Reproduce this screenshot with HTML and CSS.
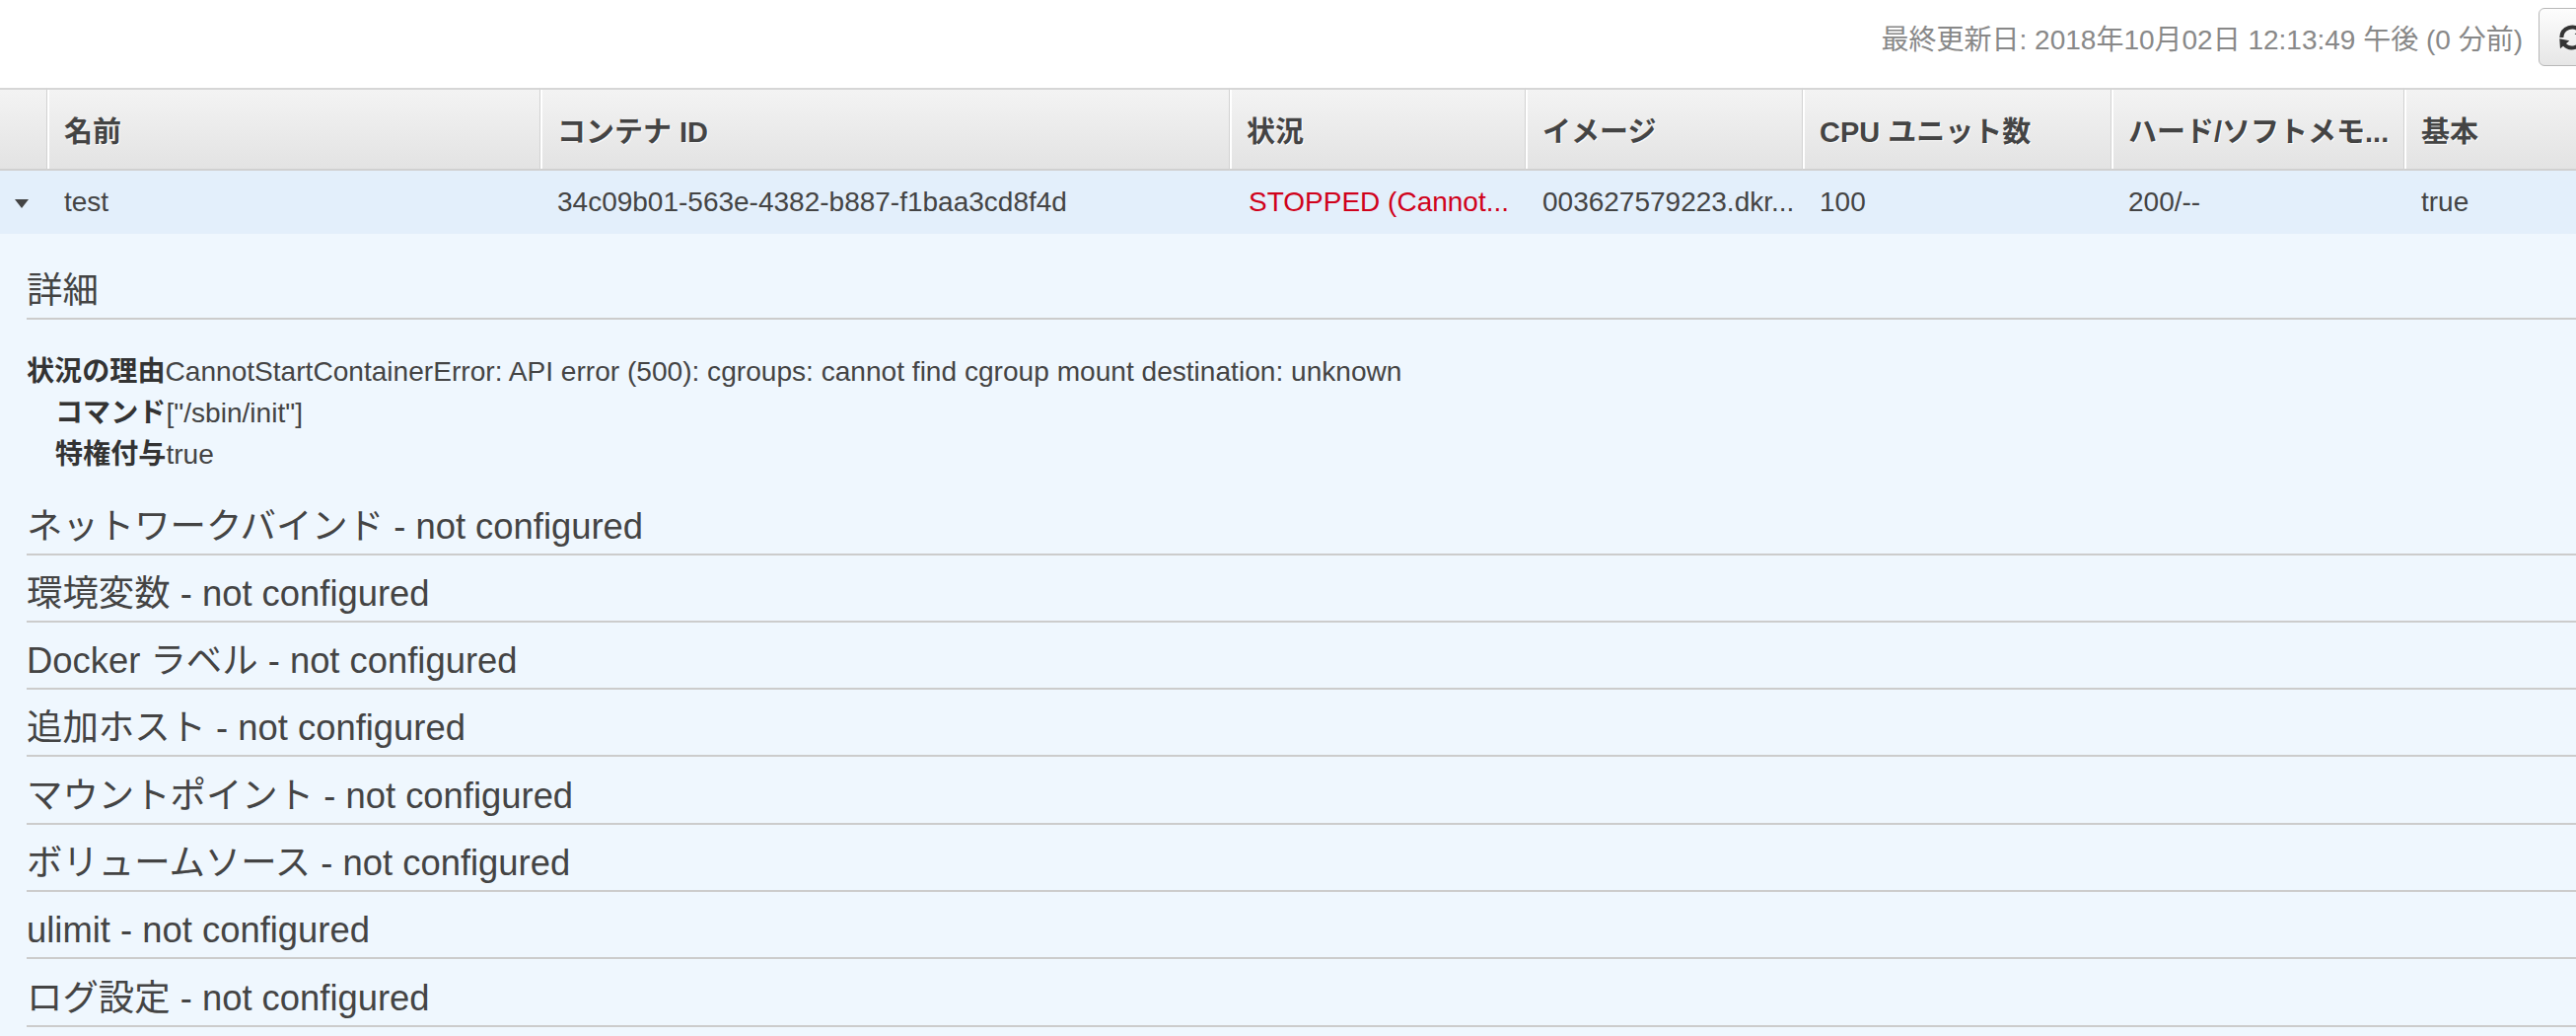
FILE: index.html
```html
<!DOCTYPE html>
<html lang="ja">
  <head>
    <meta charset="UTF-8" />
    <meta name="viewport" content="width=device-width, initial-scale=1.0" />
    <title>コンテナ詳細</title>
    <link rel="stylesheet" href="styles.css">
  </head>
  <body>
    <div class="page">
      <div class="toolbar">
        <span class="updated">最終更新日: 2018年10月02日 12:13:49 午後 (0 分前)</span>
        <button class="refresh" title="更新">
          <svg viewBox="0 0 24 24" width="32" height="32">
            <path d="M18.2 7.2A8 8 0 0 0 4 12" fill="none" stroke="#333" stroke-width="3" />
            <polygon points="21,3.5 21.5,11 14,9.5" fill="#333" />
            <path d="M5.8 16.8A8 8 0 0 0 20 12" fill="none" stroke="#333" stroke-width="3" />
            <polygon points="3,20.5 2.5,13 10,14.5" fill="#333" />
          </svg>
        </button>
      </div>

      <table class="grid">
        <colgroup>
          <col style="width: 48px">
          <col style="width: 500px">
          <col style="width: 699px">
          <col style="width: 300px">
          <col style="width: 281px">
          <col style="width: 313px">
          <col style="width: 297px">
          <col>
        </colgroup>
        <thead>
          <tr>
            <th class="toggle"></th>
            <th>名前</th>
            <th>コンテナ ID</th>
            <th>状況</th>
            <th>イメージ</th>
            <th>CPU ユニット数</th>
            <th>ハード/ソフトメモ...</th>
            <th>基本</th>
          </tr>
        </thead>
        <tbody>
          <tr class="open">
            <td class="toggle"><span class="caret"></span></td>
            <td>test</td>
            <td>34c09b01-563e-4382-b887-f1baa3cd8f4d</td>
            <td class="stopped">STOPPED (Cannot...</td>
            <td>003627579223.dkr...</td>
            <td>100</td>
            <td>200/--</td>
            <td>true</td>
          </tr>
          <tr class="detail-row">
            <td colspan="8">
              <div class="details">
                <h3 class="section-title">詳細</h3>
                <div class="props">
                  <div class="prop first"><b>状況の理由</b>CannotStartContainerError: API error (500): cgroups: cannot find cgroup mount destination: unknown</div>
                  <div class="prop"><b>コマンド</b>["/sbin/init"]</div>
                  <div class="prop"><b>特権付与</b>true</div>
                </div>
                <h3 class="section-title">ネットワークバインド - not configured</h3>
                <h3 class="section-title">環境変数 - not configured</h3>
                <h3 class="section-title">Docker ラベル - not configured</h3>
                <h3 class="section-title">追加ホスト - not configured</h3>
                <h3 class="section-title">マウントポイント - not configured</h3>
                <h3 class="section-title">ボリュームソース - not configured</h3>
                <h3 class="section-title">ulimit - not configured</h3>
                <h3 class="section-title">ログ設定 - not configured</h3>
              </div>
            </td>
          </tr>
        </tbody>
      </table>
    </div>
  </body>
</html>
```

FILE: styles.css
```css
html,
body {
  margin: 0;
  overflow: hidden;
  background-color: #fff;
}

body {
  font-family: "Liberation Sans", "Noto Sans CJK JP", sans-serif;
  color: #444;
}

.page {
  width: 2650px;
}

.toolbar {
  display: flex;
  justify-content: flex-end;
  align-items: center;
  gap: 16px;
  height: 59px;
  padding: 8px 8px 22px 0;
}

.updated {
  font-size: 28px;
  color: #888;
  white-space: nowrap;
}

.refresh {
  width: 68px;
  height: 59px;
  padding: 0;
  display: flex;
  justify-content: center;
  align-items: center;
  border: 1px solid #b8b8b8;
  border-radius: 6px;
  background: linear-gradient(#fdfdfd, #e6e6e6);
}

.grid {
  width: 100%;
  table-layout: fixed;
  border-collapse: separate;
  border-spacing: 0;
}

.grid th {
  height: 80px;
  padding: 0 17px;
  text-align: left;
  font-size: 29px;
  font-weight: bold;
  color: #444;
  text-shadow: 1px 1px 0 #fff;
  white-space: nowrap;
  overflow: hidden;
  background: linear-gradient(#f3f3f3, #e3e3e3);
  border-top: 2px solid #d6d6d6;
  border-bottom: 2px solid #d0d0d0;
  border-right: 1px solid #d2d2d2;
}

.grid th + th {
  box-shadow: inset 2px 0 0 #fff;
}

.grid th:last-child {
  border-right: 0;
}

.open td {
  height: 64px;
  padding: 0 17px;
  font-size: 28px;
  color: #444;
  white-space: nowrap;
  overflow: hidden;
  background-color: #e3effb;
}

.open td.toggle {
  padding: 0 0 0 15px;
}

.caret {
  display: block;
  width: 0;
  height: 0;
  margin-top: 2px;
  border-left: 7px solid transparent;
  border-right: 7px solid transparent;
  border-top: 9px solid #444;
}

.open td.stopped {
  padding-left: 19px;
  color: #d0021b;
}

.detail-row td {
  padding: 0;
  background-color: #eff7fe;
}

.details {
  padding: 19px 0 30px 27px;
}

.section-title {
  margin: 0;
  padding: 17.3px 0 5px;
  font-size: 36.4px;
  line-height: 44px;
  font-weight: normal;
  color: #444;
  white-space: nowrap;
  border-bottom: 2px solid #cccccc;
}

.props {
  margin: 32px 0 12px;
  font-size: 28.1px;
  line-height: 42px;
  color: #444;
}

.prop {
  padding-left: 29px;
  white-space: nowrap;
}

.prop.first {
  padding-left: 0;
}

.prop b {
  color: #333;
}
```
